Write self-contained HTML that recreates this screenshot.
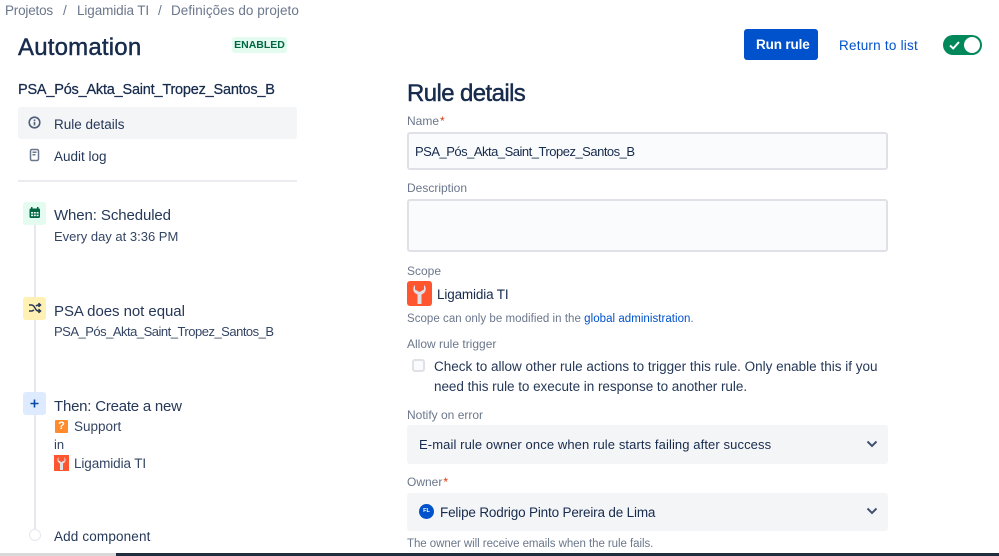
<!DOCTYPE html>
<html><head><meta charset="utf-8"><style>
html,body{margin:0;padding:0;background:#fff}
body{width:999px;height:556px;position:relative;overflow:hidden;font-family:"Liberation Sans",sans-serif;color:#172b4d}
.t{position:absolute;white-space:nowrap;font-size:14px;line-height:20px;color:#253858}
.l{position:absolute;white-space:nowrap;font-size:12px;line-height:16px;color:#6b778c}
.b{position:absolute;box-sizing:border-box}
.req{color:#de350b;margin-left:1px}
.h{-webkit-text-stroke:.45px currentColor}
svg{position:absolute;display:block}
</style></head><body>
<div class="t" style="left:5px;top:1px;color:#6b778c;font-size:13.5px;letter-spacing:-.2px">Projetos</div>
<div class="t" style="left:63px;top:1px;color:#6b778c;font-size:13.5px">/</div>
<div class="t" style="left:77px;top:1px;color:#6b778c;font-size:13.5px;letter-spacing:-.1px">Ligamidia TI</div>
<div class="t" style="left:158px;top:1px;color:#6b778c;font-size:13.5px">/</div>
<div class="t" style="left:171px;top:1px;color:#6b778c;font-size:13.5px;letter-spacing:.05px">Definições do projeto</div>

<div class="t h" style="left:18px;top:33px;font-size:24px;line-height:30px;color:#172b4d;letter-spacing:.2px">Automation</div>
<div class="b" style="left:232px;top:37px;width:55px;height:16px;background:#e3fcef;border-radius:3px;color:#006644;font-size:10.5px;font-weight:bold;line-height:16px;text-align:center">ENABLED</div>

<div class="t h" style="left:18px;top:80px;font-size:14.5px;color:#172b4d;letter-spacing:-.21px;-webkit-text-stroke-width:.25px">PSA_Pós_Akta_Saint_Tropez_Santos_B</div>
<div class="b" style="left:18px;top:107px;width:279px;height:32px;background:#f4f5f7;border-radius:3px"></div>
<svg style="left:27px;top:115px" width="15" height="15" viewBox="0 0 15 15"><circle cx="7.5" cy="7.5" r="5.3" fill="none" stroke="#505f79" stroke-width="1.6"/><rect x="6.7" y="6.8" width="1.6" height="3.6" fill="#505f79"/><rect x="6.7" y="4.5" width="1.6" height="1.5" fill="#505f79"/></svg>
<div class="t" style="left:54px;top:114.500px;font-size:13.5px">Rule details</div>
<svg style="left:29px;top:148px" width="12" height="15" viewBox="0 0 12 15"><rect x="1.500" y="1.500" width="8" height="11" rx="1.500" fill="none" stroke="#6b778c" stroke-width="1.500"/><rect x="3.500" y="3.500" width="4" height="1.500" fill="#6b778c"/><rect x="3.500" y="6" width="3" height="1.500" fill="#6b778c"/></svg>
<div class="t" style="left:54px;top:147px;font-size:13.5px">Audit log</div>
<div class="b" style="left:18px;top:180px;width:279px;height:2px;background:#ebecf0"></div>

<div class="b" style="left:34px;top:224px;width:2px;height:305px;background:#e6e8ef"></div>
<div class="b" style="left:23px;top:202px;width:23px;height:23px;background:#e3fcef;border-radius:3px"></div>
<svg style="left:28px;top:206px" width="14" height="15" viewBox="0 0 14 15"><rect x="1.500" y="2.500" width="10.500" height="9.500" rx="1.200" fill="#006644"/><rect x="3" y="1" width="1.500" height="2.500" fill="#006644"/><rect x="9" y="1" width="1.500" height="2.500" fill="#006644"/><rect x="3" y="6" width="2" height="1.600" fill="#e3fcef"/><rect x="5.800" y="6" width="2" height="1.600" fill="#e3fcef"/><rect x="8.600" y="6" width="2" height="1.600" fill="#e3fcef"/><rect x="3" y="8.600" width="2" height="1.600" fill="#e3fcef"/><rect x="5.800" y="8.600" width="2" height="1.600" fill="#e3fcef"/><rect x="8.600" y="8.600" width="2" height="1.600" fill="#e3fcef"/></svg>
<div class="t" style="left:54px;top:206px;font-size:15px;letter-spacing:-.1px">When: Scheduled</div>
<div class="t" style="left:54px;top:227px;font-size:13px;color:#344563">Every day at 3:36 PM</div>

<div class="b" style="left:23px;top:297px;width:23px;height:23px;background:#fff0b3;border-radius:3px"></div>
<svg style="left:28px;top:302px" width="14" height="13" viewBox="0 0 14 13"><path d="M1 3h2.500c1.500 0 2.500 1 3.500 3s2 3 3.500 3H12M1 9h2.500c1 0 1.800-.5 2.300-1.200M8 4.200C8.600 3.400 9.300 3 10.500 3H12M10.500 1.200L12.500 3l-2 1.800M10.500 7.200L12.500 9l-2 1.800" fill="none" stroke="#253858" stroke-width="1.500"/></svg>
<div class="t" style="left:54px;top:302px;font-size:15px;letter-spacing:-.05px">PSA does not equal</div>
<div class="t" style="left:54px;top:322px;font-size:13px;color:#344563;letter-spacing:-.5px">PSA_Pós_Akta_Saint_Tropez_Santos_B</div>

<div class="b" style="left:23px;top:392px;width:23px;height:23px;background:#deebff;border-radius:3px"></div>
<svg style="left:29px;top:398px" width="11" height="11" viewBox="0 0 11 11"><path d="M5.500 1.500v8M1.500 5.500h8" stroke="#0747a6" stroke-width="1.600" fill="none"/></svg>
<div class="t" style="left:54px;top:397px;font-size:15px;letter-spacing:-.22px">Then: Create a new</div>
<div class="b" style="left:55px;top:420px;width:13px;height:13px;background:#ff8b2c;border-radius:1px;color:#fff;font-size:11px;font-weight:bold;line-height:13px;text-align:center">?</div>
<div class="t" style="left:74px;top:417px;font-size:13.5px;color:#344563">Support</div>
<div class="t" style="left:54px;top:435px;font-size:13px;color:#344563">in</div>
<div class="b" style="left:54px;top:455px;width:15px;height:16px;background:#ff5630"></div>
<svg style="left:54px;top:455px" width="15" height="16" viewBox="0 0 15 16"><path d="M4.500 2C2.500 4.500 3.500 7.500 6 8.500V15h3V8.500C11.500 7.500 12.500 4.500 10.500 2V5.500L7.500 7 4.500 5.500z" fill="#dfe1e6"/></svg>
<div class="t" style="left:74px;top:454px;font-size:13.5px;color:#344563;letter-spacing:-.1px">Ligamidia TI</div>
<div class="b" style="left:29px;top:529px;width:12px;height:12px;border:1.500px solid #e6e8ef;border-radius:50%;background:#fff"></div>
<div class="t" style="left:54px;top:527px;font-size:13.5px;letter-spacing:.15px">Add component</div>

<div class="b" style="left:744px;top:29px;width:74px;height:31px;background:#0052cc;border-radius:3px;color:#fff;font-size:13.5px;font-weight:bold;line-height:32px;padding-left:12px;letter-spacing:-.15px">Run rule</div>
<div class="t" style="left:839px;top:36px;font-size:13.5px;color:#0052cc;letter-spacing:.23px">Return to list</div>
<div class="b" style="left:943px;top:35px;width:39px;height:20px;background:#00875a;border-radius:10px"></div>
<div class="b" style="left:964px;top:37px;width:16px;height:16px;background:#fff;border-radius:50%"></div>
<svg style="left:948px;top:39px" width="14" height="12" viewBox="0 0 14 12"><path d="M2 6.500L5.200 9.500L11 3" fill="none" stroke="#fff" stroke-width="2"/></svg>

<div class="t h" style="left:407px;top:79px;font-size:24px;line-height:30px;color:#172b4d;letter-spacing:-.6px">Rule details</div>
<div class="l" style="left:407px;top:113px">Name<span class="req">*</span></div>
<div class="b" style="left:407px;top:132px;width:481px;height:38px;background:#fafbfc;border:2px solid #dfe1e6;border-radius:3px"></div>
<div class="t" style="left:415px;top:142px;font-size:13px;color:#172b4d;letter-spacing:-.5px">PSA_Pós_Akta_Saint_Tropez_Santos_B</div>
<div class="l" style="left:407px;top:180px">Description</div>
<div class="b" style="left:407px;top:199px;width:481px;height:53px;background:#fafbfc;border:2px solid #dfe1e6;border-radius:3px"></div>
<div class="l" style="left:407px;top:263px">Scope</div>
<div class="b" style="left:407px;top:281px;width:25px;height:25px;background:#ff5630;border-radius:3px"></div>
<svg style="left:407px;top:281px" width="25" height="25" viewBox="0 0 25 25"><path d="M8 4C4.500 7.500 6.500 12 10.500 13.500V23h4V13.500C18.500 12 20.500 7.500 17 4V8.500L12.500 11 8 8.500z" fill="#dfe1e6"/></svg>
<div class="t" style="left:437px;top:285px;font-size:13.5px;color:#172b4d;letter-spacing:-.15px">Ligamidia TI</div>
<div class="l" style="left:407px;top:311px;font-size:11.5px;letter-spacing:.04px">Scope can only be modified in the <span style="color:#0052cc">global administration</span>.</div>
<div class="l" style="left:407px;top:336px">Allow rule trigger</div>
<div class="b" style="left:412px;top:359px;width:13px;height:13px;background:#fafbfc;border:2px solid #dfe1e6;border-radius:3px"></div>
<div class="t" style="left:434px;top:357px;font-size:13.5px">Check to allow other rule actions to trigger this rule. Only enable this if you</div>
<div class="t" style="left:434px;top:377px;font-size:13.5px;letter-spacing:-.04px">need this rule to execute in response to another rule.</div>
<div class="l" style="left:407px;top:407px">Notify on error</div>
<div class="b" style="left:407px;top:425px;width:481px;height:39px;background:#f4f5f7;border-radius:3px"></div>
<div class="t" style="left:419px;top:435px;font-size:13px;color:#172b4d;letter-spacing:.1px">E-mail rule owner once when rule starts failing after success</div>
<svg style="left:865px;top:438px" width="14" height="12" viewBox="0 0 14 12"><path d="M2.500 3.500L7 8l4.500-4.500" fill="none" stroke="#42526e" stroke-width="2"/></svg>
<div class="l" style="left:407px;top:474px">Owner<span class="req">*</span></div>
<div class="b" style="left:407px;top:493px;width:481px;height:38px;background:#f4f5f7;border-radius:3px"></div>
<div class="b" style="left:419px;top:504px;width:15px;height:15px;background:#0052cc;border-radius:50%;color:#fff;font-size:5.5px;font-weight:bold;line-height:15px;text-align:center">FL</div>
<div class="t" style="left:440px;top:503px;font-size:13.5px;color:#172b4d;letter-spacing:-.17px">Felipe Rodrigo Pinto Pereira de Lima</div>
<svg style="left:865px;top:505px" width="14" height="12" viewBox="0 0 14 12"><path d="M2.500 3.500L7 8l4.500-4.500" fill="none" stroke="#42526e" stroke-width="2"/></svg>
<div class="l" style="left:407px;top:536px;font-size:11.5px;letter-spacing:-.06px">The owner will receive emails when the rule fails.</div>

<div class="b" style="left:0;top:553px;width:116px;height:3px;background:#d9d9d9"></div>
<div class="b" style="left:116px;top:553px;width:883px;height:3px;background:#1f2d3d"></div>
</body></html>
